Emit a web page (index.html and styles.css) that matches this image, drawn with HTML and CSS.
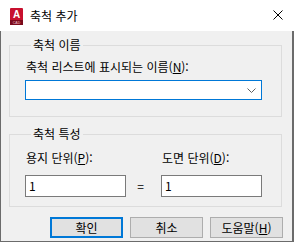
FILE: index.html
```html
<!DOCTYPE html>
<html lang="ko">
<head>
    <meta charset="UTF-8">
    <title>축척 추가</title>
    <link rel="stylesheet" href="styles.css">
</head>
<body>
    <div class="titlebar">
        <svg class="app-icon" width="13" height="17" viewBox="0 0 13 17">
            <rect x="0" y="0" width="13" height="17" rx="1" fill="#c8102e"/>
            <rect x="0" y="12" width="13" height="5" fill="#7a0a1c"/>
            <text x="6.5" y="10" text-anchor="middle" font-family="Liberation Sans, sans-serif" font-size="10" font-weight="bold" fill="#fff">A</text>
            <text x="6.5" y="16" text-anchor="middle" font-family="Liberation Sans, sans-serif" font-size="3.5" fill="#f3c4cc">CAD</text>
        </svg>
        <span class="title">축척 추가</span>
        <svg class="close" width="10" height="10" viewBox="0 0 10 10">
            <path d="M0.5 0.5 L9.5 9.5 M9.5 0.5 L0.5 9.5" stroke="#000" stroke-width="1" fill="none"/>
        </svg>
    </div>

    <div class="content">
        <fieldset class="group group-name">
            <legend>축척 이름</legend>
            <div class="field-label">축척 리스트에 표시되는 이름(<u>N</u>):</div>
            <div class="combo">
                <svg class="chevron" width="9" height="5" viewBox="0 0 9 5">
                    <path d="M0.5 0.5 L4.5 4.5 L8.5 0.5" stroke="#5f5f5f" stroke-width="1" fill="none"/>
                </svg>
            </div>
        </fieldset>

        <fieldset class="group group-props">
            <legend>축척 특성</legend>
            <div class="units">
                <div class="field-label">용지 단위(<u>P</u>):</div>
                <div></div>
                <div class="field-label">도면 단위(<u>D</u>):</div>
                <div class="textbox">1</div>
                <div class="equals">=</div>
                <div class="textbox">1</div>
            </div>
        </fieldset>

        <div class="buttons">
            <button class="btn btn-default">확인</button>
            <button class="btn">취소</button>
            <button class="btn">도움말(<u>H</u>)</button>
        </div>
    </div>
</body>
</html>
```

FILE: styles.css
```css
body {
    margin: 0;
    width: 294px;
    height: 242px;
    overflow: hidden;
    background-color: #f0f0f0;
    font-family: "Noto Sans CJK KR", "Noto Sans", sans-serif;
    font-size: 12px;
    line-height: 16px;
    color: #000;
}

.titlebar {
    height: 31px;
    background: #fff;
    display: flex;
    align-items: center;
    padding-left: 10px;
    padding-right: 11px;
}

.app-icon {
    display: block;
    margin-right: 7px;
    margin-top: 1px;
}

.title {
    flex: 1;
}

.close {
    display: block;
    margin-top: -1px;
}

.content {
    box-sizing: border-box;
    height: 211px;
    border: 1px solid #6b6b6b;
    border-top: none;
    border-right-width: 2px;
    padding-top: 6px;
}

/* group boxes */
.group {
    box-sizing: border-box;
    width: 273px;
    margin: 0 0 0 8px;
    border: 1px solid #dcdcdc;
    padding: 6px 15px 16px 15px;
}

.group legend {
    padding: 0 2px;
    margin-left: 6px;
    line-height: 16px;
}

.group-props {
    margin-top: 9px;
    padding-top: 8px;
    padding-bottom: 9px;
}

.field-label {
    padding-left: 1px;
    white-space: nowrap;
}

.combo {
    box-sizing: border-box;
    width: 237px;
    height: 20px;
    margin-top: 5px;
    background: #fff;
    border: 1px solid #0078d7;
    display: flex;
    align-items: center;
    justify-content: flex-end;
    padding-right: 5px;
}

.chevron {
    display: block;
    margin-top: 1px;
}

.units {
    display: grid;
    grid-template-columns: 101px 35px 101px;
    row-gap: 9px;
    align-items: center;
}

.textbox {
    box-sizing: border-box;
    height: 22px;
    background: #fff;
    border: 1px solid #7a7a7a;
    padding: 2px 3px;
    line-height: 16px;
}

.equals {
    text-align: center;
    padding-right: 6px;
}

/* buttons */
.buttons {
    display: flex;
    gap: 7px;
    margin-top: 10px;
    padding-left: 49px;
}

.btn {
    box-sizing: border-box;
    width: 73px;
    height: 21px;
    padding: 0;
    background: #e1e1e1;
    border: 1px solid #adadad;
    font-family: inherit;
    font-size: 12px;
    line-height: 16px;
    color: #000;
}

.btn-default {
    border: 2px solid #0078d7;
}
```
